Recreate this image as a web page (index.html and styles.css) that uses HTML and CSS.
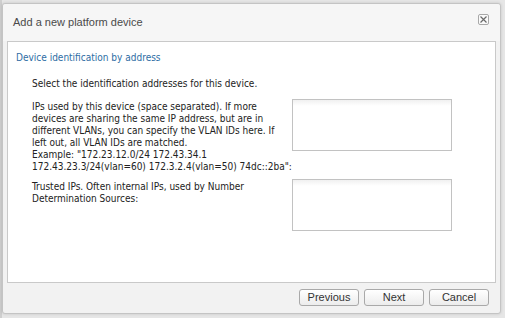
FILE: index.html
```html
<!DOCTYPE html>
<html lang="en">
<head>
    <meta charset="UTF-8">
    <title>Add a new platform device</title>
    <link rel="stylesheet" href="styles.css">
</head>
<body>
    <div class="page-edge"></div>
    <div class="dialog">
        <div class="dialog-header">
            <span class="dialog-title">Add a new platform device</span>
            <button class="close-btn" title="Close">
                <svg width="7" height="7" viewBox="0 0 7 7"><path d="M0.5 0.5L6.5 6.5M6.5 0.5L0.5 6.5" stroke="#6a6a6a" stroke-width="1.2"/></svg>
            </button>
        </div>

        <div class="panel">
            <div class="panel-title">Device identification by address</div>
            <div class="panel-body">
                <p class="intro">Select the identification addresses for this device.</p>

                <div class="field">
                    <label class="field-label">IPs used by this device (space separated). If more devices are sharing the same IP address, but are in different VLANs, you can specify the VLAN IDs here. If left out, all VLAN IDs are matched.<br>Example: "172.23.12.0/24 172.43.34.1 <span class="nowrap">172.43.23.3/24(vlan=60) 172.3.2.4(vlan=50) 74dc::2ba":</span></label>
                    <textarea class="field-input"></textarea>
                </div>

                <div class="field">
                    <label class="field-label">Trusted IPs. Often internal IPs, used by Number Determination Sources:</label>
                    <textarea class="field-input"></textarea>
                </div>
            </div>
        </div>

        <div class="dialog-footer">
            <button class="btn">Previous</button>
            <button class="btn">Next</button>
            <button class="btn">Cancel</button>
        </div>
    </div>
</body>
</html>
```

FILE: styles.css
```css
body {
    margin: 0;
    background-color: #e6e6e6;
    font-family: Tahoma, "DejaVu Sans Condensed", "DejaVu Sans", sans-serif;
    font-size: 10px;
    color: #222;
    height: 318px;
    overflow: hidden;
    position: relative;
}
.page-edge {
    position: absolute;
    left: 0;
    top: 0;
    width: 2px;
    height: 318px;
    background: #cfcfcf;
}
.dialog {
    position: relative;
    margin: 3px 0 0 2px;
    width: 497px;
    height: 309px;
    background: #f2f2f2;
    border: 1px solid #c4c4c4;
    border-radius: 3px;
    box-shadow: 0 0 3px rgba(0,0,0,0.15);
    display: flex;
    flex-direction: column;
}
.dialog-header {
    height: 37px;
    display: flex;
    align-items: center;
    justify-content: space-between;
    padding: 0 12px 0 10px;
    background: #f6f6f6;
    border-radius: 3px 3px 0 0;
}
.dialog-title {
    font-family: "Liberation Sans", Arial, sans-serif;
    font-size: 11px;
    color: #4a4a4a;
    margin-top: -2px;
}
.close-btn {
    width: 11px;
    height: 11px;
    padding: 0;
    margin: -7px -1px 0 0;
    border: 1px solid #a8a8a8;
    border-radius: 2px;
    background: #fafafa;
    display: flex;
    align-items: center;
    justify-content: center;
}
.panel {
    margin: 0 4px;
    height: 240px;
    background: #fff;
    border: 1px solid #c9c9c9;
}
.panel-title {
    color: #2e6da4;
    font-size: 10px;
    padding: 10px 0 0 8px;
}
.panel-body {
    padding: 0 0 0 24px;
}
.intro {
    margin: 15px 0 10px;
}
.field {
    display: flex;
    align-items: flex-start;
    margin-bottom: 6px;
}
.field-label {
    width: 250px;
    margin-right: 10px;
    padding-top: 2px;
    line-height: 12px;
}
.nowrap {
    white-space: nowrap;
}
.field-input {
    margin: 0;
    width: 160px;
    height: 52px;
    box-sizing: border-box;
    border: 1px solid #c2c2c2;
    background: linear-gradient(#f0f0f0, #fff 6px);
    resize: none;
}
.dialog-footer {
    flex: 1;
    display: flex;
    justify-content: flex-end;
    align-items: center;
    gap: 5px;
    padding: 0 11px 2px 0;
}
.btn {
    width: 60px;
    height: 17px;
    padding: 0;
    font-family: "Liberation Sans", Arial, sans-serif;
    font-size: 11px;
    color: #333;
    border: 1px solid #a9a9a9;
    border-radius: 3px;
    background: linear-gradient(#ffffff, #ececec);
}
```
